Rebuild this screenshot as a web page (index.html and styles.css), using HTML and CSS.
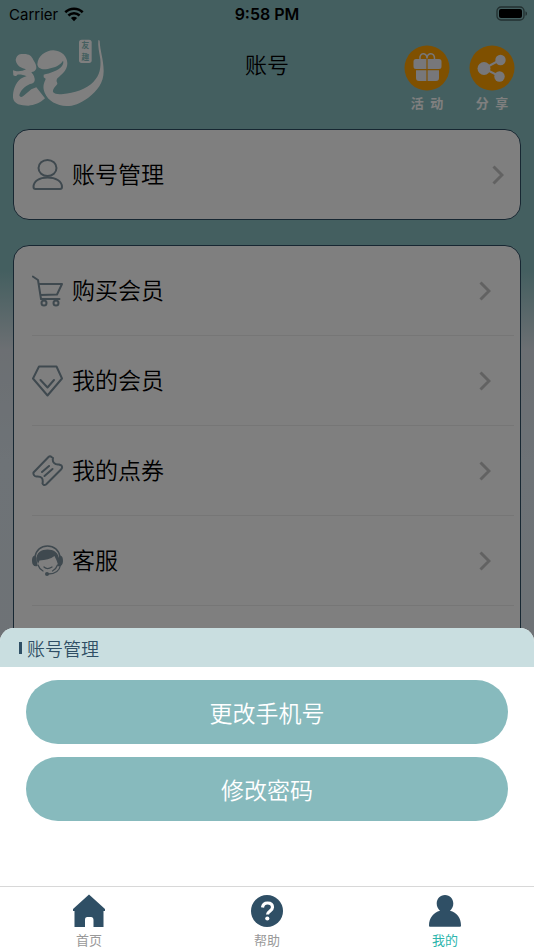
FILE: index.html
```html
<!DOCTYPE html>
<html lang="zh-CN">
<head>
<meta charset="utf-8">
<meta name="viewport" content="width=device-width, initial-scale=1">
<title>账号</title>
<link rel="stylesheet" href="styles.css">
</head>
<body>
<div class="app">
  <main class="page">
    <div class="status">
      <span class="status-left">Carrier
        <svg width="20" height="15" viewBox="0 0 20 15" fill="none" stroke="#000" stroke-width="2.6"><path d="M1.3 5.2a12.6 12.6 0 0 1 17.4 0M4.4 8.5a8.2 8.2 0 0 1 11.2 0"/><path d="M10 14.2 6.9 11.1a4.5 4.5 0 0 1 6.2 0z" fill="#000" stroke="none"/></svg>
      </span>
      <span class="status-time">9:58 PM</span>
      <span class="status-right">
        <svg width="32" height="16" viewBox="0 0 32 16"><rect x="1" y="1" width="27" height="13" rx="4" fill="none" stroke="#000" stroke-opacity=".5" stroke-width="1.3"/><rect x="3" y="3" width="23" height="9" rx="2"/><path d="M29.5 5.2c2 .8 2 3.8 0 4.6z" fill-opacity=".5"/></svg>
      </span>
    </div>
    <header class="top">
      <svg class="logo" viewBox="6 9 276 204" fill="#fff">
        <path d="M17 72C20 55 30 53 42 54c16 0 23 6 28 18 5 8 10 16 9 25-2 7-7 11-15 11 2 4 9 10 10 20 1 10-4 14-14 16-15 6-30 21-32 34 2 6 6 6 12 2l24-20 15-6 26 33c-13 13-33 21-50 22-23-1-43-4-46-24-1-20 7-45 23-57 8-4 14-6 18-7-8-5-22-6-28-5-4 6-8 4-12 2l-1-15 5 1c10 4 26 1 34-4-12-4-28-8-31-28z"/>
        <path d="M82 85c2-25 23-41 48-42 25 1 42 19 42 39 0 16-10 28-20 36-8 8-12 10-12 14-2 4 3 8 2 12-6 8-14 14-13 24 5 8 21 7 31 6 30-2 70-14 90-36 20-20 23-43 21-68-3-20-8-40-6-58l4 2c1 31 12 56 12 91 0 35-19 60-46 80-25 18-45 25-65 25-30-2-55-14-66-40-6-15-4-25 2-38l1-4-6-4v-8c19-4 44-12 55-26 4-6 5-12 3-16-6 10-19 19-35 22-18 6-40 7-42-11z"/>
        <rect x="207" y="11" width="38" height="70" rx="8"/>
        <text class="seal" x="226" y="37">友</text>
        <text class="seal" x="226" y="71">趣</text>
      </svg>
      <h1>账号</h1>
      <div class="actions">
        <button class="action">
          <svg width="46" height="46" viewBox="0 0 46 46" fill="#eeeff5"><circle cx="23" cy="23" r="22.5" fill="#ffa000"/><path d="M12 14h10.400v10H12a2.500 2.500 0 0 1-2.500-2.500v-5A2.500 2.500 0 0 1 12 14zM23.600 14H35a2.500 2.500 0 0 1 2.500 2.500v5A2.500 2.500 0 0 1 35 24H23.600zM12 25.300h10.400V36H15a3 3 0 0 1-3-3zM23.600 25.300H35V33a3 3 0 0 1-3 3h-8.400z"/><path d="M16 14c-1-7 7-7 7-.5M23 13.500c0-6.500 8-6.500 7.500.5" fill="none" stroke="#eeeff5" stroke-width="1.500"/></svg>
          <span>活&ensp;动</span>
        </button>
        <button class="action">
          <svg width="46" height="46" viewBox="0 0 46 46" fill="#eeeff5"><circle cx="23" cy="23" r="22.5" fill="#ffa000"/><path d="M32 14.500 15 23.500l16 8" fill="none" stroke="#eeeff5" stroke-width="2"/><circle cx="15" cy="23.500" r="6.500"/><circle cx="31.500" cy="15" r="5.200"/><circle cx="30.500" cy="31.500" r="5.200"/></svg>
          <span>分&ensp;享</span>
        </button>
      </div>
    </header>

    <section class="card">
      <a class="row" href="#account">
        <svg class="icon" viewBox="0 0 32 32"><ellipse cx="15.500" cy="9" rx="9" ry="8"/><path d="M1.500 28c0-6 6-9.500 14-9.500s14.500 3.500 14.500 9.500c0 1.500-.8 2-2 2H3.500c-1.300 0-2-.5-2-2z"/></svg>
        <span class="label">账号管理</span>
        <svg class="chevron" viewBox="0 0 12 20"><path d="m1.500 1.500 8.500 8.500-8.500 8.500"/></svg>
      </a>
    </section>

    <nav class="card list">
      <a class="row" href="#buy">
        <svg class="icon" viewBox="0 0 32 32"><path d="M.8 1.500 6 5l3 19h18.500M8 9h22l-5 10.500-16.500.5"/><circle cx="12" cy="28" r="2.500"/><circle cx="24" cy="28" r="2.500"/></svg>
        <span class="label">购买会员</span>
        <svg class="chevron" viewBox="0 0 12 20"><path d="m1.500 1.500 8.500 8.500-8.500 8.500"/></svg>
      </a>
      <a class="row" href="#member">
        <svg class="icon" viewBox="0 0 32 32"><path d="M7 1.500h17.500l5.500 12-14.500 17L1 13.500zM8.500 15l7 7.500 6.500-7.500"/></svg>
        <span class="label">我的会员</span>
        <svg class="chevron" viewBox="0 0 12 20"><path d="m1.500 1.500 8.500 8.500-8.500 8.500"/></svg>
      </a>
      <a class="row" href="#coupons">
        <svg class="icon" viewBox="0 0 32 32"><path d="M1.500 17.500 16.500 2c1-1 2-1 3 0l1.500 1c-1 4 1.500 7 6 6.500l2.500 1c1 1.500.5 3-.5 4L14 29.500c-1.500 1-3 .5-3.500-1 1-5-1-7.500-6-7-2 0-3.500-2-3-4zM10 17l7-6M12.500 21l8-7"/></svg>
        <span class="label">我的点券</span>
        <svg class="chevron" viewBox="0 0 12 20"><path d="m1.500 1.500 8.500 8.500-8.500 8.500"/></svg>
      </a>
      <a class="row" href="#service">
        <svg class="icon" viewBox="0 0 32 32"><path d="M3 12C4 5 9 1 15.500 1S27 5 28 12" stroke-width="1.500"/><path d="M5 16C3 7 10 4.500 15.500 4.500S28 7 26.500 16l-1 3c0-3-2-5-3-8-4 3-9 4-15 4.500L6 19zM4 10.500C1 10.500 0 12 0 16s2 6 5.500 5zM27 10.500c3 0 4 1.500 4 5.500s-2 6-5.500 5z" fill="#7e929e" stroke="none"/><path d="M28.500 20c-1 6-6 9-12.500 9M6 20c1 3 3 5 5 6M25.500 20c-1 3-3 5-5 6M12 22c2 2 5 2 8 0" stroke-width="1.300"/><circle cx="15" cy="29" r="2" fill="#7e929e" stroke="none"/></svg>
        <span class="label">客服</span>
        <svg class="chevron" viewBox="0 0 12 20"><path d="m1.500 1.500 8.500 8.500-8.500 8.500"/></svg>
      </a>
      <div class="row"></div>
    </nav>

    <div class="backdrop"></div>
    <section class="sheet" role="dialog" aria-labelledby="sheet-title">
      <h2 id="sheet-title">账号管理</h2>
      <div class="sheet-body">
        <button class="pill">更改手机号</button>
        <button class="pill">修改密码</button>
      </div>
    </section>
  </main>

  <nav class="tabs">
    <a href="#home">
      <svg width="32" height="34" viewBox="0 0 32 34"><path d="M16 .5 32 15v2h-1.500v16H20.500v-7c0-2-1-3-2.500-3h-3.500c-2 0-2.500 1-2.500 3v7H1.500V17H0v-2z"/></svg>
      <span>首页</span>
    </a>
    <a href="#help">
      <svg width="32" height="34" viewBox="0 0 32 34"><circle cx="16" cy="17" r="16"/><path d="M11.500 13.500c.5-3.500 2.500-4.500 5-4.500 3 0 5 1.500 5 4.200 0 4-5 4-5 7.300" fill="none" stroke="#fff" stroke-width="3.200"/><circle cx="16.300" cy="24.500" r="2.100" fill="#fff"/></svg>
      <span>帮助</span>
    </a>
    <a href="#mine" class="active" aria-current="page">
      <svg width="32" height="34" viewBox="0 0 32 34"><path d="M16 1c5 0 8.300 4 8.300 8.500 0 3-1.300 5.500-3.300 7.200C28 18.500 32 24 32 31.500c0 1-.5 1.200-1.200 1.200H1.200C.5 32.700 0 32.500 0 31.500 0 24 4.500 18.500 11 16.700c-2-1.700-3.300-4.200-3.300-7.200C7.700 5 11 1 16 1z"/></svg>
      <span>我的</span>
    </a>
  </nav>
</div>
</body>
</html>
```
FILE: styles.css
```css
* {
  box-sizing: border-box;
}

body {
  margin: 0;
  font-family: Inter, "Noto Sans CJK SC", sans-serif;
  color: #000;
}

h1,
h2 {
  margin: 0;
  font-weight: 350;
}

a {
  color: inherit;
  text-decoration: none;
}

button {
  border: 0;
  padding: 0;
  background: none;
  font: inherit;
  cursor: pointer;
}

svg {
  display: block;
  flex: none;
}

.app {
  display: flex;
  flex-direction: column;
  height: 100vh;
}

.page {
  position: relative;
  flex: 1;
  min-height: 0;
  overflow: hidden;
  background: linear-gradient(#88bec0 270px, #d8dfe6 350px, #dce6ee 460px, #dce4ea);
}

.status {
  display: grid;
  grid-template-columns: 1fr auto 1fr;
  align-items: center;
  height: 28px;
  padding: 0 6px;
  font-size: 15px;
}

.status-left {
  display: flex;
  align-items: center;
  gap: 6px;
  padding-left: 3px;
}

.status-time {
  font-size: 16px;
  font-weight: 600;
}

.status-right {
  justify-self: end;
}

.top {
  display: grid;
  grid-template-columns: 1fr auto 1fr;
  align-items: start;
  height: 101px;
  padding: 11px 12px 0;
}

.logo {
  width: 92px;
  height: 68px;
}

.seal {
  fill: #88bec0;
  font-family: "Noto Sans CJK SC", sans-serif;
  font-size: 23px;
  font-weight: 700;
  text-anchor: middle;
}

.top h1 {
  padding-top: 10px;
  font-size: 22px;
  line-height: 32px;
}

.actions {
  display: flex;
  justify-content: flex-end;
  gap: 19px;
  padding: 6px 7px 0 0;
}

.action {
  display: flex;
  flex-direction: column;
  align-items: center;
  gap: 3px;
  color: #fff;
  font-size: 13px;
  line-height: 18px;
  font-weight: 700;
}

.card {
  margin: 0 13px 25px;
  border: 1px solid #2f4f65;
  border-radius: 16px;
  background: #fff;
}

.row {
  display: flex;
  align-items: center;
  gap: 8px;
  height: 89px;
  padding: 0 16px 0 18px;
}

.list .row {
  height: 90px;
  margin: 0 6px 0 18px;
  padding: 0 23px 0 0;
  border-bottom: 1px solid #ececec;
}

.icon {
  width: 32px;
  height: 32px;
  fill: none;
  stroke: #7e929e;
  stroke-width: 2;
  stroke-linejoin: round;
  stroke-linecap: round;
}

.label {
  flex: 1;
  font-size: 23px;
  font-weight: 350;
  line-height: 32px;
}

.chevron {
  width: 12px;
  height: 20px;
  fill: none;
  stroke: #c4c4c4;
  stroke-width: 3;
}

.backdrop {
  position: absolute;
  inset: 0;
  background: rgba(0, 0, 0, 0.5);
}

.sheet {
  position: absolute;
  right: 0;
  bottom: 0;
  left: 0;
  overflow: hidden;
  border-radius: 14px 14px 0 0;
  background: #fff;
}

.sheet h2 {
  display: flex;
  align-items: center;
  gap: 5px;
  height: 39px;
  padding-left: 19px;
  background: #c9dee0;
  color: #2f4f65;
  font-size: 18px;
}

.sheet h2::before {
  content: "";
  width: 3px;
  height: 12px;
  background: #2f4f65;
}

.sheet-body {
  display: flex;
  flex-direction: column;
  gap: 13px;
  padding: 13px 26px 65px;
}

.pill {
  height: 64px;
  border-radius: 32px;
  background: #87babd;
  color: #fff;
  font-size: 23px;
  font-weight: 350;
}

.tabs {
  display: flex;
  height: 64px;
  border-top: 1px solid #d8d8d8;
  background: #fff;
}

.tabs a {
  display: flex;
  flex: 1;
  flex-direction: column;
  align-items: center;
  gap: 3px;
  padding-top: 7px;
  color: #999;
  font-size: 13px;
  line-height: 18px;
}

.tabs svg {
  fill: #2f4f65;
}

.tabs .active {
  color: #2db5ac;
}
```
